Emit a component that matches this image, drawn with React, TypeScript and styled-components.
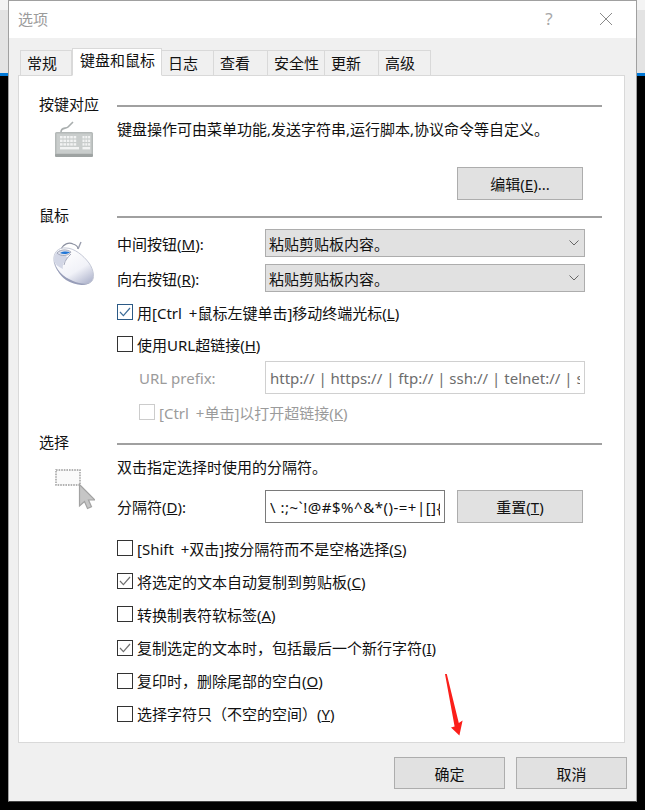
import styled, { createGlobalStyle } from 'styled-components';

const GlobalStyle = createGlobalStyle`
  html, body {
    margin: 0;
    padding: 0;
    background: #000;
  }
  body {
    font-family: "Noto Sans", "Noto Sans CJK SC", sans-serif;
    font-size: 15px;
    color: #111;
  }
`;

const Page = styled.div`
  width: 645px;
  height: 810px;
  overflow: hidden;
  padding-left: 8px;
  box-sizing: border-box;
  background: linear-gradient(#f4f4f4 0 10px, #e3e3e3 10px 73px, #0078d7 73px 76px, #000 76px);
`;

const Window = styled.div`
  position: relative;
  width: 629px;
  height: 802px;
  box-sizing: border-box;
  display: flex;
  flex-direction: column;
  background: #f0f0f0;
  border: 1px solid #a0a0a0;
  border-color: #a0a0a0 #a0a0a0 #444 #a0a0a0;
`;

const TitleBar = styled.div`
  height: 37px;
  flex: none;
  box-sizing: border-box;
  display: flex;
  align-items: center;
  padding: 0 0 2px 9px;
  background: #fff;
`;

const TitleText = styled.span`
  flex: 1;
  color: #9b9b9b;
`;

const HelpMark = styled.span`
  width: 16px;
  margin-right: 42px;
  text-align: center;
  font-size: 17px;
  color: #a8a8a8;
`;

const CloseIcon = styled.svg`
  width: 14px;
  height: 14px;
  margin-right: 23px;
`;

const TabStrip = styled.div`
  height: 38px;
  flex: none;
  display: flex;
  align-items: flex-end;
  padding-left: 11px;
  margin-bottom: -1px;
  position: relative;
  z-index: 1;
`;

const Tab = styled.div<{ $width: number; $active?: boolean }>`
  width: ${(p) => p.$width}px;
  height: ${(p) => (p.$active ? 28 : 26)}px;
  box-sizing: border-box;
  padding-left: ${(p) => (p.$active ? 7 : 6)}px;
  line-height: ${(p) => (p.$active ? 22 : 24)}px;
  white-space: nowrap;
  background: ${(p) => (p.$active ? '#fff' : '#f0f0f0')};
  border: 1px solid #d9d9d9;
  border-left-width: ${(p) => (p.$active ? 1 : 0)}px;
  border-bottom-color: ${(p) => (p.$active ? '#fff' : '#d9d9d9')};
  &:first-child {
    border-left-width: 1px;
  }
`;

const Panel = styled.div`
  width: 607px;
  height: 668px;
  margin-left: 9px;
  box-sizing: border-box;
  padding: 18px 22px 0 20px;
  background: #fff;
  border: 1px solid #d9d9d9;
`;

const Section = styled.section<{ $gap?: number }>`
  margin-bottom: ${(p) => p.$gap ?? 0}px;
`;

const SectionHead = styled.div`
  height: 20px;
  display: flex;
  align-items: center;
`;

const SectionTitle = styled.span`
  width: 78px;
  flex: none;
  line-height: 20px;
`;

const SectionRule = styled.div`
  flex: 1;
  height: 2px;
  margin-top: 4px;
  background: #a0a0a0;
`;

const SectionBody = styled.div`
  display: flex;
`;

const IconCell = styled.div<{ $left: number; $top: number }>`
  width: 78px;
  flex: none;
  box-sizing: border-box;
  padding: ${(p) => p.$top}px 0 0 ${(p) => p.$left}px;
  svg {
    display: block;
  }
`;

const Content = styled.div`
  flex: 1;
  display: flex;
  flex-direction: column;
`;

const Description = styled.div`
  height: 20px;
  line-height: 20px;
  margin-top: 5px;
  white-space: nowrap;
`;

const ButtonRow = styled.div`
  display: flex;
  justify-content: flex-end;
  padding-right: 19px;
  margin-top: 28px;
`;

const PushButton = styled.div`
  width: 126px;
  height: 33px;
  box-sizing: border-box;
  display: flex;
  align-items: center;
  justify-content: center;
  background: #e1e1e1;
  border: 1px solid #adadad;
`;

const FieldRow = styled.div<{ $mt: number; $indent?: number }>`
  display: flex;
  align-items: center;
  margin-top: ${(p) => p.$mt}px;
  margin-left: ${(p) => p.$indent ?? 0}px;
`;

const FieldLabel = styled.label<{ $width: number; $disabled?: boolean }>`
  width: ${(p) => p.$width}px;
  flex: none;
  white-space: nowrap;
  color: ${(p) => (p.$disabled ? '#9b9b9b' : 'inherit')};
`;

const Combo = styled.div`
  width: 320px;
  height: 28px;
  box-sizing: border-box;
  display: flex;
  align-items: center;
  justify-content: space-between;
  padding: 0 5px 0 3px;
  background: #e1e1e1;
  border: 1px solid #adadad;
`;

const Chevron = styled.svg`
  width: 10px;
  height: 6px;
`;

const TextField = styled.input<{ $width: number; $disabled?: boolean; $tracking?: number }>`
  width: ${(p) => p.$width}px;
  height: 33px;
  box-sizing: border-box;
  flex: none;
  padding: 0 4px;
  font: inherit;
  letter-spacing: ${(p) => p.$tracking ?? 0}px;
  outline: none;
  background: #fff;
  color: ${(p) => (p.$disabled ? '#6d6d6d' : '#111')};
  border: 1px solid ${(p) => (p.$disabled ? '#d0d0d0' : '#7a7a7a')};
`;

const ResetSpacer = styled.div`
  width: 12px;
  flex: none;
`;

const CheckRow = styled.div<{ $mt?: number; $indent?: number; $disabled?: boolean }>`
  height: 20px;
  display: flex;
  align-items: center;
  gap: 4px;
  margin-top: ${(p) => p.$mt ?? 0}px;
  margin-left: ${(p) => p.$indent ?? 0}px;
  white-space: nowrap;
  word-spacing: 3px;
  color: ${(p) => (p.$disabled ? '#9b9b9b' : 'inherit')};
`;

const CheckList = styled.div`
  display: flex;
  flex-direction: column;
  gap: 13.2px;
  margin-top: 15px;
`;

const CheckBox = styled.span<{ $tone: string }>`
  width: 16px;
  height: 16px;
  flex: none;
  box-sizing: border-box;
  display: flex;
  align-items: center;
  justify-content: center;
  background: #fff;
  border: 1px solid ${(p) => p.$tone};
`;

const Footer = styled.div`
  display: flex;
  justify-content: flex-end;
  gap: 11px;
  padding: 14px 9px 0 0;
`;

const FooterButton = styled(PushButton)`
  width: 111px;
  height: 32px;
`;

const ArrowMark = styled.svg`
  position: absolute;
  left: 436px;
  top: 673px;
  width: 20px;
  height: 64px;
`;

function Check({ checked, tone = '#333', mark = '#707070' }: { checked?: boolean; tone?: string; mark?: string }) {
  return (
    <CheckBox $tone={tone}>
      {checked && (
        <svg width="12" height="10" viewBox="0 0 12 10">
          <path d="M1 5l3.4 3.6L11 1" fill="none" stroke={mark} strokeWidth="1.2" />
        </svg>
      )}
    </CheckBox>
  );
}

function ComboBox({ text }: { text: string }) {
  return (
    <Combo>
      <span>{text}</span>
      <Chevron viewBox="0 0 10 6">
        <path d="M.5.5L5 5 9.5.5" fill="none" stroke="#666" />
      </Chevron>
    </Combo>
  );
}

function KeyboardIcon() {
  const keys: [number, number, number][] = [];
  [0, 1, 2].forEach((r) => {
    for (let i = 0; i < 5; i++) keys.push([6 + i * 3.4, 16 + r * 3.6, 2.6]);
    for (let i = 0; i < 3; i++) keys.push([28.5 + i * 2.8, 16 + r * 3.6, 2]);
  });
  return (
    <svg width="40" height="38" viewBox="0 0 40 38">
      <path d="M7 12c0-5 5-3 7-5s3-3 5-5" fill="none" stroke="#a9aeae" strokeWidth="1.6" />
      <rect x="1" y="12" width="38" height="24" rx="1.5" fill="#b4b9b8" />
      <rect x="2.5" y="13.5" width="35" height="20" fill="#c9cdcc" />
      <rect x="1" y="34" width="38" height="3" rx="1" fill="#9ea3a2" />
      {keys.map(([x, y, w], i) => (
        <rect key={i} x={x} y={y} width={w} height="2.4" fill="#f2f3f3" />
      ))}
      <rect x="6" y="27" width="19" height="2.4" fill="#f2f3f3" />
      <rect x="28.5" y="27" width="7.6" height="2.4" fill="#f2f3f3" />
    </svg>
  );
}

function MouseIcon() {
  return (
    <svg width="44" height="46" viewBox="0 0 44 46">
      <defs>
        <linearGradient id="mouseShell" x1="0.2" y1="0.1" x2="0.8" y2="1">
          <stop offset="0" stopColor="#ffffff" />
          <stop offset="0.6" stopColor="#f1f2f8" />
          <stop offset="1" stopColor="#b4b9d0" />
        </linearGradient>
      </defs>
      <path d="M9 9c2-5 8-7 12-5 3 1 5 3 5 5" fill="none" stroke="#8b90a0" strokeWidth="1.2" />
      <path d="M26 9l3-7" fill="none" stroke="#9a9eae" strokeWidth="1.4" />
      <path
        d="M2 21C1 13 6 7 14 8c8 0 17 7 23 15 5 7 6 16 2 19-5 4-14 2-22-2C9 36 3 29 2 21z"
        fill="url(#mouseShell)"
        stroke="#c4c8d6"
      />
      <path d="M2 20c2 10 9 17 19 21 7 3 14 4 18 1-6 5-17 3-25-2C8 36 3 28 2 20z" fill="#979db8" />
      <path d="M2 21C2 14 5 11 8 10l8 8c-4 3-6 7-5 11-5-2-8-5-9-8z" fill="#d3d7e6" />
      <path d="M5 13c4-4 10-4 14-1-2 4-10 5-14 1z" fill="#dfe2ec" stroke="#8f94a8" strokeWidth=".7" />
      <path d="M8 13c3-1.800 7-1.800 10-.8-2 2-7 2.400-10 .8z" fill="#2277d6" />
      <path d="M19 14c-3 3-6 6-7 11" fill="none" stroke="#a7abbd" />
    </svg>
  );
}

function SelectionIcon() {
  return (
    <svg width="40" height="42" viewBox="0 0 40 42">
      <rect x="1" y="1" width="24" height="15" fill="#fafafa" stroke="#9a9a9a" strokeWidth="1.4" strokeDasharray="1.6 1" />
      <path
        d="M24.500 15.500V37l5-4.500 3 7 4-1.800-3-6.700h6.500z"
        fill="#c6c6c6"
        stroke="#a2a2a2"
        strokeWidth="1.2"
      />
    </svg>
  );
}

export default function App() {
  return (
    <Page>
      <GlobalStyle />
      <Window>
        <TitleBar>
          <TitleText>选项</TitleText>
          <HelpMark>?</HelpMark>
          <CloseIcon viewBox="0 0 14 14">
            <path d="M1 1l12 12M13 1L1 13" stroke="#8a8a8a" fill="none" />
          </CloseIcon>
        </TitleBar>

        <TabStrip>
          <Tab $width={52}>常规</Tab>
          <Tab $width={90} $active>
            键盘和鼠标
          </Tab>
          <Tab $width={52}>日志</Tab>
          <Tab $width={54}>查看</Tab>
          <Tab $width={57}>安全性</Tab>
          <Tab $width={54}>更新</Tab>
          <Tab $width={52}>高级</Tab>
        </TabStrip>

        <Panel>
          <Section $gap={5}>
            <SectionHead>
              <SectionTitle>按键对应</SectionTitle>
              <SectionRule />
            </SectionHead>
            <SectionBody>
              <IconCell $left={15} $top={6}>
                <KeyboardIcon />
              </IconCell>
              <Content>
                <Description>键盘操作可由菜单功能,发送字符串,运行脚本,协议命令等自定义。</Description>
                <ButtonRow>
                  <PushButton>
                    <span>
                      编辑(<u>E</u>)...
                    </span>
                  </PushButton>
                </ButtonRow>
              </Content>
            </SectionBody>
          </Section>

          <Section $gap={10}>
            <SectionHead>
              <SectionTitle>鼠标</SectionTitle>
              <SectionRule />
            </SectionHead>
            <SectionBody>
              <IconCell $left={13} $top={15}>
                <MouseIcon />
              </IconCell>
              <Content>
                <FieldRow $mt={4}>
                  <FieldLabel $width={148}>
                    中间按钮(<u>M</u>):
                  </FieldLabel>
                  <ComboBox text="粘贴剪贴板内容。" />
                </FieldRow>
                <FieldRow $mt={7}>
                  <FieldLabel $width={148}>
                    向右按钮(<u>R</u>):
                  </FieldLabel>
                  <ComboBox text="粘贴剪贴板内容。" />
                </FieldRow>
                <CheckRow $mt={10}>
                  <Check checked tone="#2b5a86" mark="#3d6d99" />
                  <span>
                    用[Ctrl +鼠标左键单击]移动终端光标(<u>L</u>)
                  </span>
                </CheckRow>
                <CheckRow $mt={12}>
                  <Check />
                  <span>
                    使用URL超链接(<u>H</u>)
                  </span>
                </CheckRow>
                <FieldRow $mt={7} $indent={22}>
                  <FieldLabel $width={126} $disabled>
                    URL prefix:
                  </FieldLabel>
                  <TextField $width={320} $disabled readOnly value="http:// | https:// | ftp:// | ssh:// | telnet:// | sftp://" />
                </FieldRow>
                <CheckRow $mt={8} $indent={22} $disabled>
                  <Check tone="#cccccc" />
                  <span>
                    [Ctrl +单击]以打开超链接(<u>K</u>)
                  </span>
                </CheckRow>
              </Content>
            </SectionBody>
          </Section>

          <Section>
            <SectionHead>
              <SectionTitle>选择</SectionTitle>
              <SectionRule />
            </SectionHead>
            <SectionBody>
              <IconCell $left={16} $top={17}>
                <SelectionIcon />
              </IconCell>
              <Content>
                <Description>双击指定选择时使用的分隔符。</Description>
                <FieldRow $mt={13}>
                  <FieldLabel $width={148}>
                    分隔符(<u>D</u>):
                  </FieldLabel>
                  <TextField $width={180} $tracking={0.5} readOnly value={'\\ :;~`!@#$%^&*()-=+|[]{}'} />
                  <ResetSpacer />
                  <PushButton>
                    <span>
                      重置(<u>T</u>)
                    </span>
                  </PushButton>
                </FieldRow>
                <CheckList>
                  <CheckRow>
                    <Check />
                    <span>
                      [Shift +双击]按分隔符而不是空格选择(<u>S</u>)
                    </span>
                  </CheckRow>
                  <CheckRow>
                    <Check checked />
                    <span>
                      将选定的文本自动复制到剪贴板(<u>C</u>)
                    </span>
                  </CheckRow>
                  <CheckRow>
                    <Check />
                    <span>
                      转换制表符软标签(<u>A</u>)
                    </span>
                  </CheckRow>
                  <CheckRow>
                    <Check checked />
                    <span>
                      复制选定的文本时，包括最后一个新行字符(<u>I</u>)
                    </span>
                  </CheckRow>
                  <CheckRow>
                    <Check />
                    <span>
                      复印时，删除尾部的空白(<u>O</u>)
                    </span>
                  </CheckRow>
                  <CheckRow>
                    <Check />
                    <span>
                      选择字符只（不空的空间）(<u>Y</u>)
                    </span>
                  </CheckRow>
                </CheckList>
              </Content>
            </SectionBody>
          </Section>
        </Panel>

        <Footer>
          <FooterButton>确定</FooterButton>
          <FooterButton>取消</FooterButton>
        </Footer>

        <ArrowMark viewBox="0 0 20 64">
          <path d="M0 0l1.800 0 12 49 3.800-2.500-3.200 15-8.400-8 3.600-1z" fill="#fb1f1a" />
        </ArrowMark>
      </Window>
    </Page>
  );
}
